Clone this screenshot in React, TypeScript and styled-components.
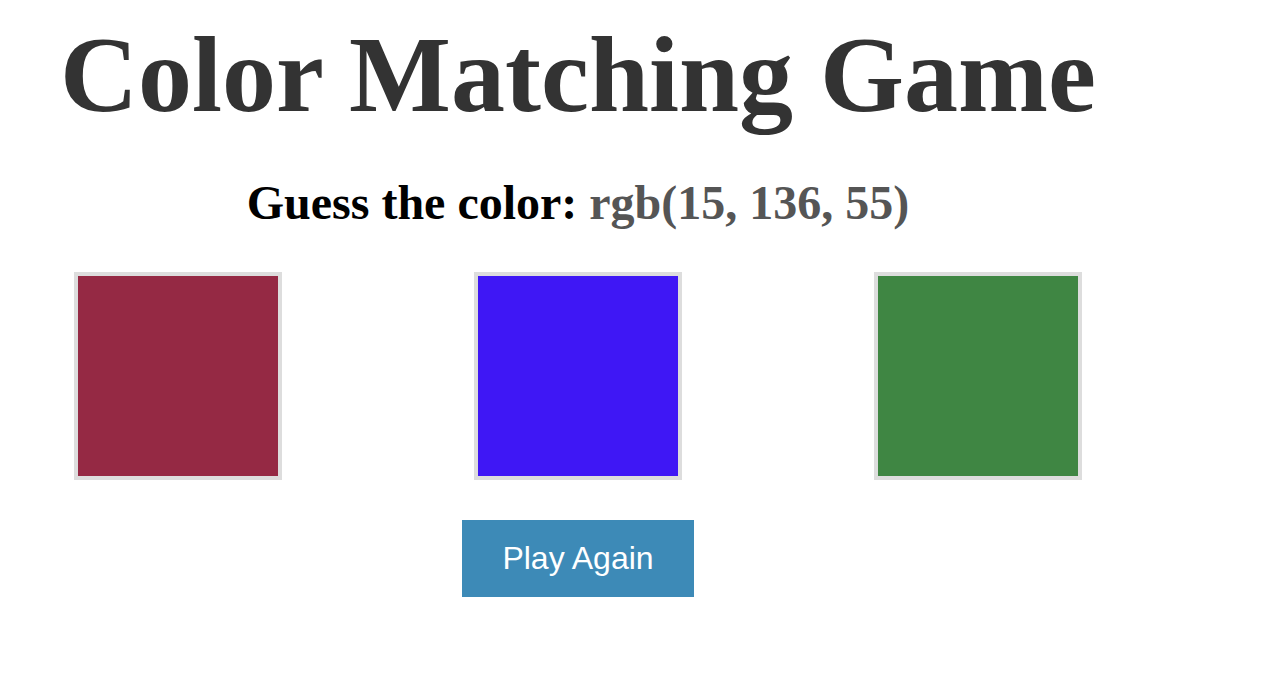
import React from "react";
import styled, { createGlobalStyle } from "styled-components";

const GlobalStyle = createGlobalStyle`
  html, body {
    margin: 0;
    padding: 0;
    background: #ffffff;
  }
  body {
    font-family: "Liberation Serif", "Times New Roman", serif;
  }
`;

const Page = styled.div`
  width: 1156px;
  display: flex;
  flex-direction: column;
  align-items: center;
  padding-top: 15px;
`;

const Title = styled.h1`
  margin: 0;
  font-family: "Liberation Serif", "Times New Roman", serif;
  font-weight: bold;
  font-size: 108px;
  line-height: 120px;
  color: #333333;
  white-space: nowrap;
`;

const Prompt = styled.h2`
  margin: 41px 0 0;
  font-family: "Liberation Serif", "Times New Roman", serif;
  font-weight: bold;
  font-size: 48px;
  line-height: 53px;
  color: #000000;
  white-space: nowrap;
`;

const Target = styled.span`
  color: #555555;
`;

const SwatchRow = styled.div`
  margin-top: 43px;
  display: flex;
  gap: 192px;
`;

const Swatch = styled.button<{ $color: string }>`
  width: 208px;
  height: 208px;
  padding: 0;
  border: 4px solid #dddddd;
  background: ${(p) => p.$color};
  cursor: pointer;
`;

const PlayButton = styled.button`
  margin-top: 40px;
  padding: 20px 40px;
  border: none;
  background: #3d8ab7;
  color: #ffffff;
  font-family: "Liberation Sans", Arial, Helvetica, sans-serif;
  font-size: 32px;
  line-height: 37px;
  cursor: pointer;
`;

const colors = ["rgb(149, 41, 68)", "rgb(63, 23, 245)", "rgb(63, 134, 67)"];

export default function App() {
  return (
    <>
      <GlobalStyle />
      <Page>
        <Title>Color Matching Game</Title>
        <Prompt>
          Guess the color: <Target>rgb(15, 136, 55)</Target>
        </Prompt>
        <SwatchRow>
          {colors.map((c) => (
            <Swatch key={c} $color={c} aria-label={c} />
          ))}
        </SwatchRow>
        <PlayButton>Play Again</PlayButton>
      </Page>
    </>
  );
}
